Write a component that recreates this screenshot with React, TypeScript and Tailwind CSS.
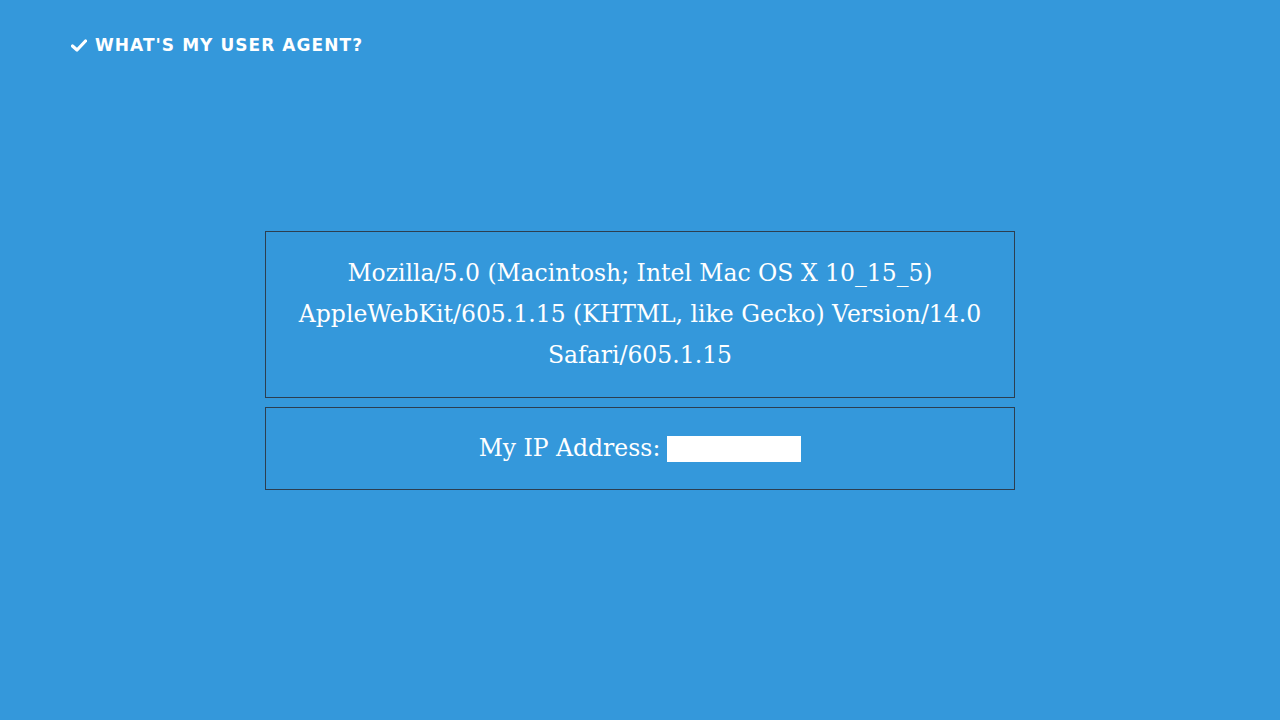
import React from "react";

export default function App() {
  return (
    <div className="min-h-screen w-full bg-[#3498db] text-white">
      <header className="h-[90px] px-[71px] pt-[36px]">
        <div className="flex items-center gap-[8px] text-[17px] font-bold tracking-[1.05px] leading-[18px]" style={{ fontFamily: '"DejaVu Sans", sans-serif' }}>
          <svg width="16" height="13" viewBox="0 0 16 13" aria-hidden="true">
            <path d="M1.5 7 L6 11 L14.5 2" fill="none" stroke="white" strokeWidth="3.2" strokeLinecap="round" strokeLinejoin="round" />
          </svg>
          <span>WHAT'S MY USER AGENT?</span>
        </div>
      </header>
      <main className="mt-[141px] flex flex-col items-center gap-[9px]" style={{ fontFamily: '"DejaVu Serif", serif' }}>
        <div className="w-[750px] border border-[#2c3e50] px-[20px] pt-[21px] pb-[21px] text-center text-[23.5px] leading-[41px]">
          Mozilla/5.0 (Macintosh; Intel Mac OS X 10_15_5)
          <br />
          AppleWebKit/605.1.15 (KHTML, like Gecko) Version/14.0
          <br />
          Safari/605.1.15
        </div>
        <div className="w-[750px] border border-[#2c3e50] px-[20px] py-[20px] text-center text-[23.5px] leading-[41px]">
          <span className="inline-flex items-center gap-[7px]">
            My IP Address:
            <span className="inline-block h-[26px] w-[134px] bg-white" />
          </span>
        </div>
      </main>
    </div>
  );
}
